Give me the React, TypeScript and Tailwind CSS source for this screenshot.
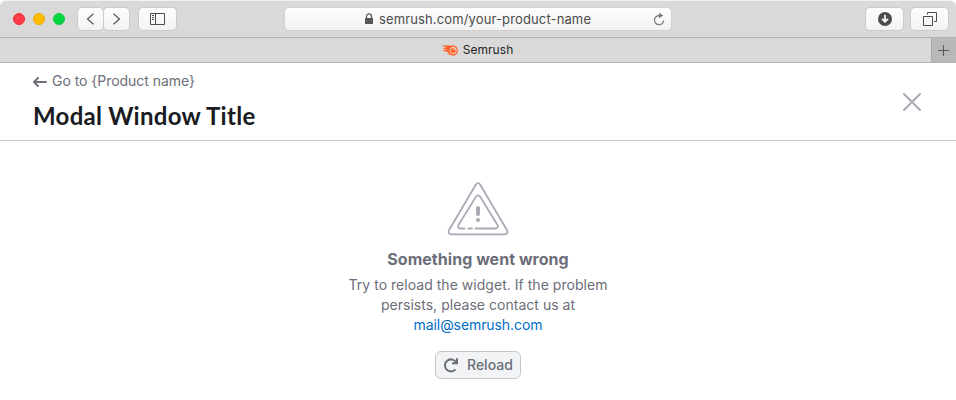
import React from "react";

const chromeButton =
  "flex h-6 shrink-0 items-center justify-center rounded-[5px] border border-[#cbcbcb] bg-linear-to-b from-[#fdfdfd] to-[#f3f3f3]";

function Toolbar() {
  return (
    <div className="flex h-[38px] shrink-0 items-center rounded-t-md border-t border-b border-t-[#f1f1f1] border-b-[#b1b1b1] bg-[#d9d9d9] pl-[13px] pr-[7px]">
      <div className="flex gap-2">
        <i className="size-3 rounded-full border border-[#f02a36] bg-[#ff3b47]" />
        <i className="size-3 rounded-full border border-[#eea807] bg-[#ffbd00]" />
        <i className="size-3 rounded-full border border-[#0cc93c] bg-[#00d742]" />
      </div>
      <div className="ml-3 flex">
        <button className={`${chromeButton} w-[27px]`}>
          <svg width="9" height="12" viewBox="0 0 9 12" fill="none" stroke="#555" strokeWidth="1.2"><path d="M7.5.7 1.5 6l6 5.3" /></svg>
        </button>
        <button className={`${chromeButton} -ml-px w-[27px]`}>
          <svg width="9" height="12" viewBox="0 0 9 12" fill="none" stroke="#555" strokeWidth="1.2"><path d="m1.5.7 6 5.3-6 5.3" /></svg>
        </button>
      </div>
      <button className={`${chromeButton} ml-2 w-[39px]`}>
        <svg width="15" height="12" viewBox="0 0 15 12" fill="none" stroke="#4c4c4c"><path d="M.5.5h14v11H.5zM5.5.5v11M2 2.5h2M2 4.5h2M2 6.5h2" /></svg>
      </button>
      <div className="ml-[107px] flex h-6 w-[388px] shrink-0 items-center rounded-[5px] border border-[#d1d1d1] bg-linear-to-b from-[#fdfdfd] to-[#f3f3f3] pl-[79px] pr-[6px]">
        <svg className="shrink-0" width="10" height="12" viewBox="0 0 10 12"><path d="M2.5 5V3.4a2.5 2.5 0 0 1 5 0V5" fill="none" stroke="#58585c" strokeWidth="1.3" /><rect x="1" y="5" width="8" height="6" rx=".6" fill="#58585c" /></svg>
        <span className="ml-[5px] whitespace-nowrap text-[13px] leading-4 tracking-[0.13px] text-[#4b4b4b]">semrush.com/your-product-name</span>
        <svg className="ml-auto" width="12" height="14" viewBox="0 0 12 14"><path d="M6.8 3.6A4.6 4.6 0 1 0 10.6 8.6" fill="none" stroke="#777" strokeWidth="1.2" /><path d="M6 .8 10.2 3.4 6 6.2z" fill="#777" /></svg>
      </div>
      <button className={`${chromeButton} ml-auto w-[39px]`}>
        <svg width="14" height="14" viewBox="0 0 14 14"><circle cx="7" cy="7" r="7" fill="#4c4c4c" /><path d="M7 2.8v6.5M4 6.8l3 3 3-3" fill="none" stroke="#fff" strokeWidth="1.7" /></svg>
      </button>
      <button className={`${chromeButton} ml-[6px] w-[39px] pl-px`}>
        <svg width="14" height="14" viewBox="0 0 14 14" fill="none" stroke="#4c4c4c"><path d="M.5 4.5h9v9h-9zM4.5 2.5v-2h9v9h-2.3" /></svg>
      </button>
    </div>
  );
}

function TabBar() {
  return (
    <div className="flex h-[25px] shrink-0 border-b border-[#b1b1b1] bg-[#d9d9d9]">
      <div className="flex flex-1 items-center justify-center pl-6">
        <svg width="16" height="11" viewBox="0 0 16 11">
          <path d="M0 .5h10.5C13.7.5 16 2.5 16 5.4S13.8 10.5 11 10.5c-2.4 0-4.6-.9-6-2.5l2.2.2C5.8 6.8 3.5 6.2 1.5 6c-.5 0-.7-.8 0-.9h3.3C3.8 4.3 2.6 3.9 1.3 3.7c-.6-.1-.6-.8 0-.8h2.9C3 2 1.5 1.2 0 .9z" fill="#ff642d" />
          <circle cx="11.2" cy="5.5" r="3.5" fill="#eadfd9" /><circle cx="11.1" cy="5.6" r="2.7" fill="#ff642d" /><path d="M11.2 3.7A1.8 1.8 0 0 1 13 5.4" fill="none" stroke="#eee" strokeWidth=".8" />
        </svg>
        <span className="ml-[5px] text-xs leading-4 tracking-[0.06px] text-[#252525]">Semrush</span>
      </div>
      <button className="flex w-[25px] items-center justify-center border-l border-[#aaa] bg-[#b8b8b8] pr-px">
        <svg width="11" height="11" viewBox="0 0 11 11" stroke="#555"><path d="M5.5 0v11M0 5.5h11" /></svg>
      </button>
    </div>
  );
}

export default function App() {
  return (
    <div className="flex h-[400px] w-[956px] flex-col overflow-hidden bg-white font-['Inter',sans-serif]">
      <Toolbar />
      <TabBar />
      <header className="flex h-[78px] shrink-0 justify-between border-b border-[#c8c8c8] pl-[33px] pr-[34px]">
        <div>
          <a className="mt-2 flex h-5 items-center text-sm leading-5 text-[#6c6e79]">
            <svg className="mt-px" width="14" height="10" viewBox="0 0 14 10" fill="none" stroke="#6c6e79" strokeWidth="1.8" strokeLinecap="round" strokeLinejoin="round"><path d="M13 5H1.2M5 1 1 5l4 4" /></svg>
            <span className="ml-[5px] tracking-[-0.04px]">Go to {"{Product name}"}</span>
          </a>
          <h1 className="mt-[9px] whitespace-nowrap font-['Lato',sans-serif] text-2xl font-bold leading-8 tracking-[0.28px] text-[#191b23]">Modal Window Title</h1>
        </div>
        <svg className="mt-[30px]" width="20" height="18" viewBox="0 0 20 18" fill="none" stroke="#a9abb6" strokeWidth="2" strokeLinecap="round"><path d="m2 1 16 16M18 1 2 17" /></svg>
      </header>
      <main className="flex flex-col items-center pt-10 text-center text-[#6c6e79]">
        <svg width="62" height="56" viewBox="0 0 62 56" fill="none" stroke="#a9abb6" strokeWidth="1.8" strokeLinecap="round" strokeLinejoin="round">
          <path d="M28.9 3.5 2 49.2C.8 51.3 1.9 53.3 4.2 53.3h53.6c2.3 0 3.4-2 2.2-4.1L33.1 3.5c-1.1-1.8-3.1-1.8-4.2 0Z" />
          <path d="M17.5 47.5h-4.2c-2 0-2.8-1.8-1.8-3.5L29 15.6c1.1-1.7 2.9-1.7 4 0L50.5 44c1 1.7.2 3.5-1.8 3.5H28.5M21.5 47.5h3.5" />
          <path d="M31 27v6" strokeWidth="4" /><circle cx="31" cy="39" r="2.1" fill="#a9abb6" stroke="none" />
        </svg>
        <h2 className="mt-[10px] text-base font-bold leading-6 tracking-[0.04px]">Something went wrong</h2>
        <p className="mt-1 w-[280px] text-sm leading-5 tracking-[0.03px]">
          Try to reload the widget. If the problem persists, please contact us at<br />
          <a className="tracking-[-0.08px] text-[#006dca]">mail@semrush.com</a>
        </p>
        <button className="mt-4 flex h-7 w-[86px] items-center rounded-md border border-[#c4c7cf] bg-[#f2f3f5] pl-[7px] text-sm font-medium leading-5">
          <svg width="16" height="16" viewBox="0 0 16 16" fill="none" stroke="#6c6e79" strokeWidth="2"><path d="M14 1.2v5H9M13.4 5.9A6 6 0 1 0 12.5 12.3" /></svg>
          <span className="ml-2">Reload</span>
        </button>
      </main>
    </div>
  );
}
